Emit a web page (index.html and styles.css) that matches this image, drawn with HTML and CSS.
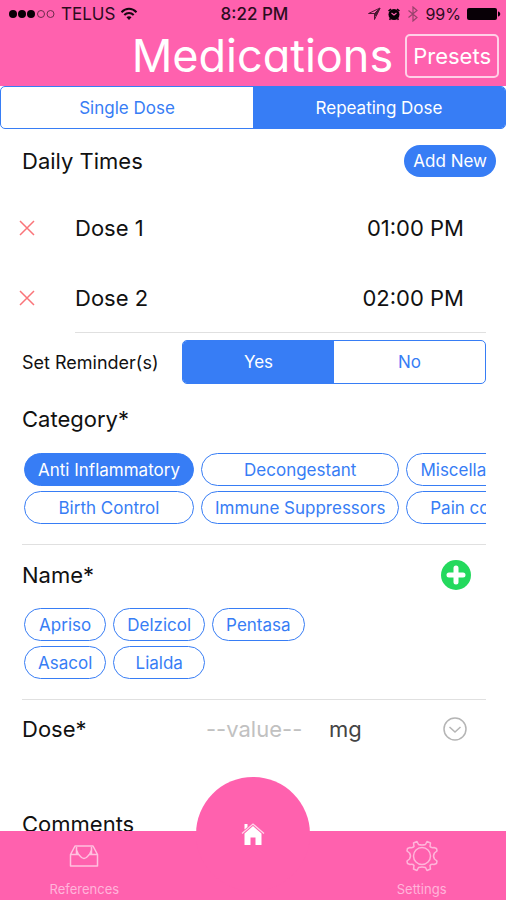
FILE: index.html
```html
<!DOCTYPE html>
<html lang="en">
<head>
<meta charset="utf-8">
<meta name="viewport" content="width=device-width, initial-scale=1">
<title>Medications</title>
<link rel="stylesheet" href="styles.css">
</head>
<body>
<header class="header">
  <div class="status">
    <div class="status-left">
      <svg width="48" height="10" viewBox="0 0 48 10" aria-hidden="true"><g fill="#080006"><circle cx="5" cy="5" r="4"/><circle cx="14" cy="5" r="4"/><circle cx="23" cy="5" r="4"/></g><g fill="none" stroke="#6d2b4b"><circle cx="33" cy="5" r="3.5"/><circle cx="42.500" cy="5" r="3.500"/></g></svg>
      <span>TELUS</span>
      <svg width="18" height="14" viewBox="0 0 18 14" fill="none" stroke="#160610" stroke-width="2" aria-hidden="true"><path d="M1.500 5.200C6 .6 12 .6 16.500 5.200M4.300 8C7 5.200 11 5.200 13.700 8"/><path d="M6.500 10.200C8 8.800 10 8.800 11.500 10.200L9 13Z" fill="#160610" stroke="none"/></svg>
    </div>
    <span class="clock">8:22 PM</span>
    <div class="status-right">
      <svg width="14" height="14" viewBox="0 0 14 14" fill="none" stroke="#4c1733" aria-hidden="true"><path d="M1.500 6.500 13 1 7.500 12.500V6.500Z"/><path d="M7.500 6.500 13 1 9 9Z" fill="#4c1733"/></svg>
      <svg width="14" height="14" viewBox="0 0 14 14" aria-hidden="true"><circle cx="7" cy="7.500" r="5.500" fill="#080006"/><path d="M1.500 4 4 2M12.500 4 10 2M3.500 11.500l-1 1.200M10.500 11.500l1 1.200" stroke="#080006" stroke-width="1.600"/><path d="M4.500 6 7 8l2.500-2" fill="none" stroke="#ff61ae" stroke-width="1.200"/></svg>
      <svg width="12" height="16" viewBox="0 0 12 16" fill="none" stroke="#98426c" stroke-width="1.200" aria-hidden="true"><path d="M1.500 4.500 10 11.500 6 15V1l4 3.500-8.500 7"/></svg>
      <span>99%</span>
      <svg width="34" height="12" viewBox="0 0 34 12" aria-hidden="true"><rect width="30" height="12" rx="2" fill="#080006"/><path d="M31 3.500c3 .5 3 4.500 0 5Z" fill="#080006"/></svg>
    </div>
  </div>
  <div class="titlebar">
    <h1 class="title">Medications</h1>
    <button class="presets" type="button">Presets</button>
  </div>
</header>

<main class="main">
  <div class="segment segment-dose" role="group" aria-label="Dose type">
    <button type="button" aria-pressed="false">Single Dose</button>
    <button type="button" aria-pressed="true">Repeating Dose</button>
  </div>

  <section class="times">
    <div class="times-head">
      <h2>Daily Times</h2>
      <button class="add-new" type="button">Add New</button>
    </div>
    <ul class="dose-list">
      <li class="dose">
        <button class="remove" type="button" aria-label="Remove dose 1"><svg width="16" height="16" viewBox="0 0 16 16" stroke="#fa7479" stroke-width="1.500"><path d="M1 1 15 15M15 1 1 15"/></svg></button>
        <span>Dose 1</span><time datetime="13:00">01:00 PM</time>
      </li>
      <li class="dose">
        <button class="remove" type="button" aria-label="Remove dose 2"><svg width="16" height="16" viewBox="0 0 16 16" stroke="#fa7479" stroke-width="1.500"><path d="M1 1 15 15M15 1 1 15"/></svg></button>
        <span>Dose 2</span><time datetime="14:00">02:00 PM</time>
      </li>
    </ul>
  </section>

  <div class="reminder">
    <span id="reminder-label">Set Reminder(s)</span>
    <div class="segment" role="group" aria-labelledby="reminder-label">
      <button type="button" aria-pressed="true">Yes</button>
      <button type="button" aria-pressed="false">No</button>
    </div>
  </div>

  <section class="block">
    <div class="block-head"><h2>Category*</h2></div>
    <div class="pills">
      <button type="button" aria-pressed="true">Anti Inflammatory</button>
      <button type="button" aria-pressed="false">Birth Control</button>
      <button type="button" aria-pressed="false">Decongestant</button>
      <button type="button" aria-pressed="false">Immune Suppressors</button>
      <button type="button" aria-pressed="false">Miscellaneous</button>
      <button type="button" aria-pressed="false">Pain control</button>
    </div>
  </section>

  <section class="block">
    <div class="block-head">
      <h2>Name*</h2>
      <button class="add" type="button" aria-label="Add name"><svg width="30" height="30" viewBox="0 0 30 30"><circle cx="15" cy="15" r="15" fill="#24d95d"/><path d="M15 8v14M8 15h14" stroke="#fff" stroke-width="5" stroke-linecap="round"/></svg></button>
    </div>
    <div class="pills">
      <button type="button" aria-pressed="false">Apriso</button>
      <button type="button" aria-pressed="false">Asacol</button>
      <button type="button" aria-pressed="false">Delzicol</button>
      <button type="button" aria-pressed="false">Lialda</button>
      <button type="button" aria-pressed="false">Pentasa</button>
    </div>
  </section>

  <div class="amount">
    <label for="dose-value">Dose*</label>
    <input id="dose-value" type="text" placeholder="--value--">
    <select aria-label="Unit"><option>mg</option></select>
    <svg class="chevron" width="24" height="24" viewBox="0 0 24 24" fill="none" stroke="#b5b5b5" stroke-width="1.500" aria-hidden="true"><circle cx="12" cy="12" r="11"/><path d="m6.500 10 5.500 5 5.500-5"/></svg>
  </div>

  <h2 class="comments">Comments</h2>
</main>

<nav class="tabs">
  <a href="#references">
    <svg width="30" height="24" viewBox="0 0 30 24" fill="none" stroke="#ffc1e0" stroke-width="1.500" stroke-linejoin="round" aria-hidden="true"><path d="M1.500 10.500 6 2H24l4.500 8.500V22H1.500ZM1.500 10.500H9.500C11 11 11.500 14.500 15 14.500s4-3.500 5.500-4h8M7.500 10V3M22.500 10V3M7.500 6 9.500 10.500M22.500 6 20.500 10.500"/></svg>
    <span>References</span>
  </a>
  <a class="home" href="#home" aria-label="Home">
    <svg width="26" height="24" viewBox="0 0 26 24" aria-hidden="true"><path d="M4.500 11.500 13 4l8.500 7.500V23H15.500V15.500H10.500V23H4.500Z" fill="#fff"/><path d="m2 11.500 11-9.500 11 9.500" fill="none" stroke="#ffd5e9" stroke-width="1.300"/><path d="M4.500 2h3v3l-3 2.500Z" fill="#fff"/></svg>
  </a>
  <a href="#settings">
    <svg width="32" height="32" viewBox="-16 -16 32 32" fill="none" stroke="#ffb5da" stroke-width="1.500" stroke-linejoin="round" aria-hidden="true"><path d="M-3.500-11.500Q0-10.500 3.500-11.500L5-14.500 8.500-13 8-9.500Q9-8 12-8.500L14.500-7.500 15-5 12.500-3Q10.500 0 12.500 3L15 5 14.500 7.500 12 8.500Q9 8 8 9.500L8.500 13 5 14.500 3.500 11.500Q0 10.500-3.500 11.500L-5 14.500-8.500 13-8 9.500Q-9 8-12 8.500L-14.500 7.500-15 5-12.500 3Q-10.500 0-12.500-3L-15-5-14.500-7.500-12-8.500Q-9-8-8-9.500L-8.500-13-5-14.500Z"/><circle r="8.500"/></svg>
    <span>Settings</span>
  </a>
</nav>
</body>
</html>
```
FILE: styles.css
```css
* { box-sizing: border-box; }

:root {
  --pink: #ff61ae;
  --blue: #377df5;
  --line: #e0e0e0;
}

body {
  margin: 0;
  height: 100vh;
  display: flex;
  flex-direction: column;
  background: #fff;
  color: #111;
  font-family: Inter, Roboto, "Liberation Sans", sans-serif;
  font-size: 22px;
}

button, input, select {
  font: inherit;
  color: inherit;
  margin: 0;
  padding: 0;
  border: 0;
  background: none;
}

h1, h2 { margin: 0; font-size: 22px; font-weight: 400; }
svg { display: block; flex: none; }

.header {
  flex: none;
  background: var(--pink);
  height: 86px;
}

.status {
  display: grid;
  grid-template-columns: 1fr auto 1fr;
  align-items: center;
  height: 28px;
  padding: 0 5px 0 8px;
  font-size: 17px;
  color: #2c0c1e;
}

.status-left, .status-right { display: flex; align-items: center; gap: 5px; }
.status-right { justify-content: flex-end; gap: 6px; font-size: 16px; }
.clock { font-weight: 500; }

.titlebar {
  display: flex;
  align-items: center;
  justify-content: flex-end;
  gap: 12px;
  height: 56px;
  padding-right: 7px;
  color: #fff;
}

.title {
  font-size: 45px;
  line-height: 52px;
  font-weight: 400;
  font-feature-settings: "cv11";
}

.presets {
  height: 44px;
  padding: 0 6px;
  border: 2px solid #ffd0e7;
  border-radius: 5px;
}

.main { flex: 1; min-height: 0; overflow: hidden; }

.segment {
  display: grid;
  grid-template-columns: 1fr 1fr;
  height: 44px;
  border: 1px solid var(--blue);
  border-radius: 5px;
  overflow: hidden;
  font-size: 17px;
  color: var(--blue);
}

.segment-dose { height: 43px; }

[aria-pressed="true"] { background: var(--blue); color: #fff; }

.times-head {
  display: flex;
  align-items: center;
  justify-content: space-between;
  height: 64px;
  padding: 0 10px 0 22px;
}

.add-new {
  height: 32px;
  padding: 0 9px;
  border-radius: 16px;
  background: var(--blue);
  color: #fff;
  font-size: 17px;
}

.dose-list {
  list-style: none;
  margin: 0 20px 0 0;
  padding: 0;
}

.dose {
  display: grid;
  grid-template-columns: 75px 1fr auto;
  align-items: center;
  height: 70px;
  padding-right: 22px;
}

.dose:last-child {
  background: linear-gradient(var(--line), var(--line)) no-repeat 75px 100% / 100% 1px;
}

.remove { padding-left: 19px; }

.reminder {
  display: grid;
  grid-template-columns: 160px 1fr;
  align-items: center;
  padding: 7px 20px 0 22px;
  font-size: 18px;
}

.block {
  margin: 0 20px 0 22px;
  padding-bottom: 20px;
  border-bottom: 1px solid var(--line);
}

.block-head {
  display: flex;
  align-items: center;
  justify-content: space-between;
  height: 60px;
  margin-bottom: 3px;
  padding-right: 15px;
}

.reminder + .block .block-head { height: 69px; margin-bottom: 0; }

.pills {
  display: grid;
  grid-template-rows: 33px 33px;
  grid-auto-flow: column;
  grid-auto-columns: max-content;
  gap: 5px 7px;
  padding-left: 2px;
  overflow: hidden;
  font-size: 17px;
  color: var(--blue);
}

.pills button {
  padding: 0 13px;
  border: 1px solid var(--blue);
  border-radius: 17px;
}

.amount {
  display: grid;
  grid-template-columns: 184px 123px 1fr 24px;
  align-items: center;
  height: 58px;
  padding: 0 39px 0 22px;
}

.amount input { width: 100%; }
.amount input::placeholder { color: #c1c1c1; opacity: 1; }

.amount select {
  grid-row: 1;
  grid-column: 3 / 5;
  appearance: none;
  color: #444;
}

.chevron {
  grid-row: 1;
  grid-column: 4;
  pointer-events: none;
}

.comments { padding: 53px 22px 0; }

.tabs {
  position: relative;
  flex: none;
  display: grid;
  grid-template-columns: 1fr 1fr 1fr;
  height: 69px;
  background: var(--pink);
}

.tabs a {
  display: flex;
  flex-direction: column;
  align-items: center;
  justify-content: flex-end;
  padding-bottom: 3px;
  color: #ffb5da;
  font-size: 13px;
  text-decoration: none;
}

.tabs a svg { margin: auto 0; }

.tabs .home {
  justify-self: center;
  width: 114px;
  height: 114px;
  margin-top: -54px;
  padding: 0;
  border-radius: 50%;
  background: var(--pink);
}
```
